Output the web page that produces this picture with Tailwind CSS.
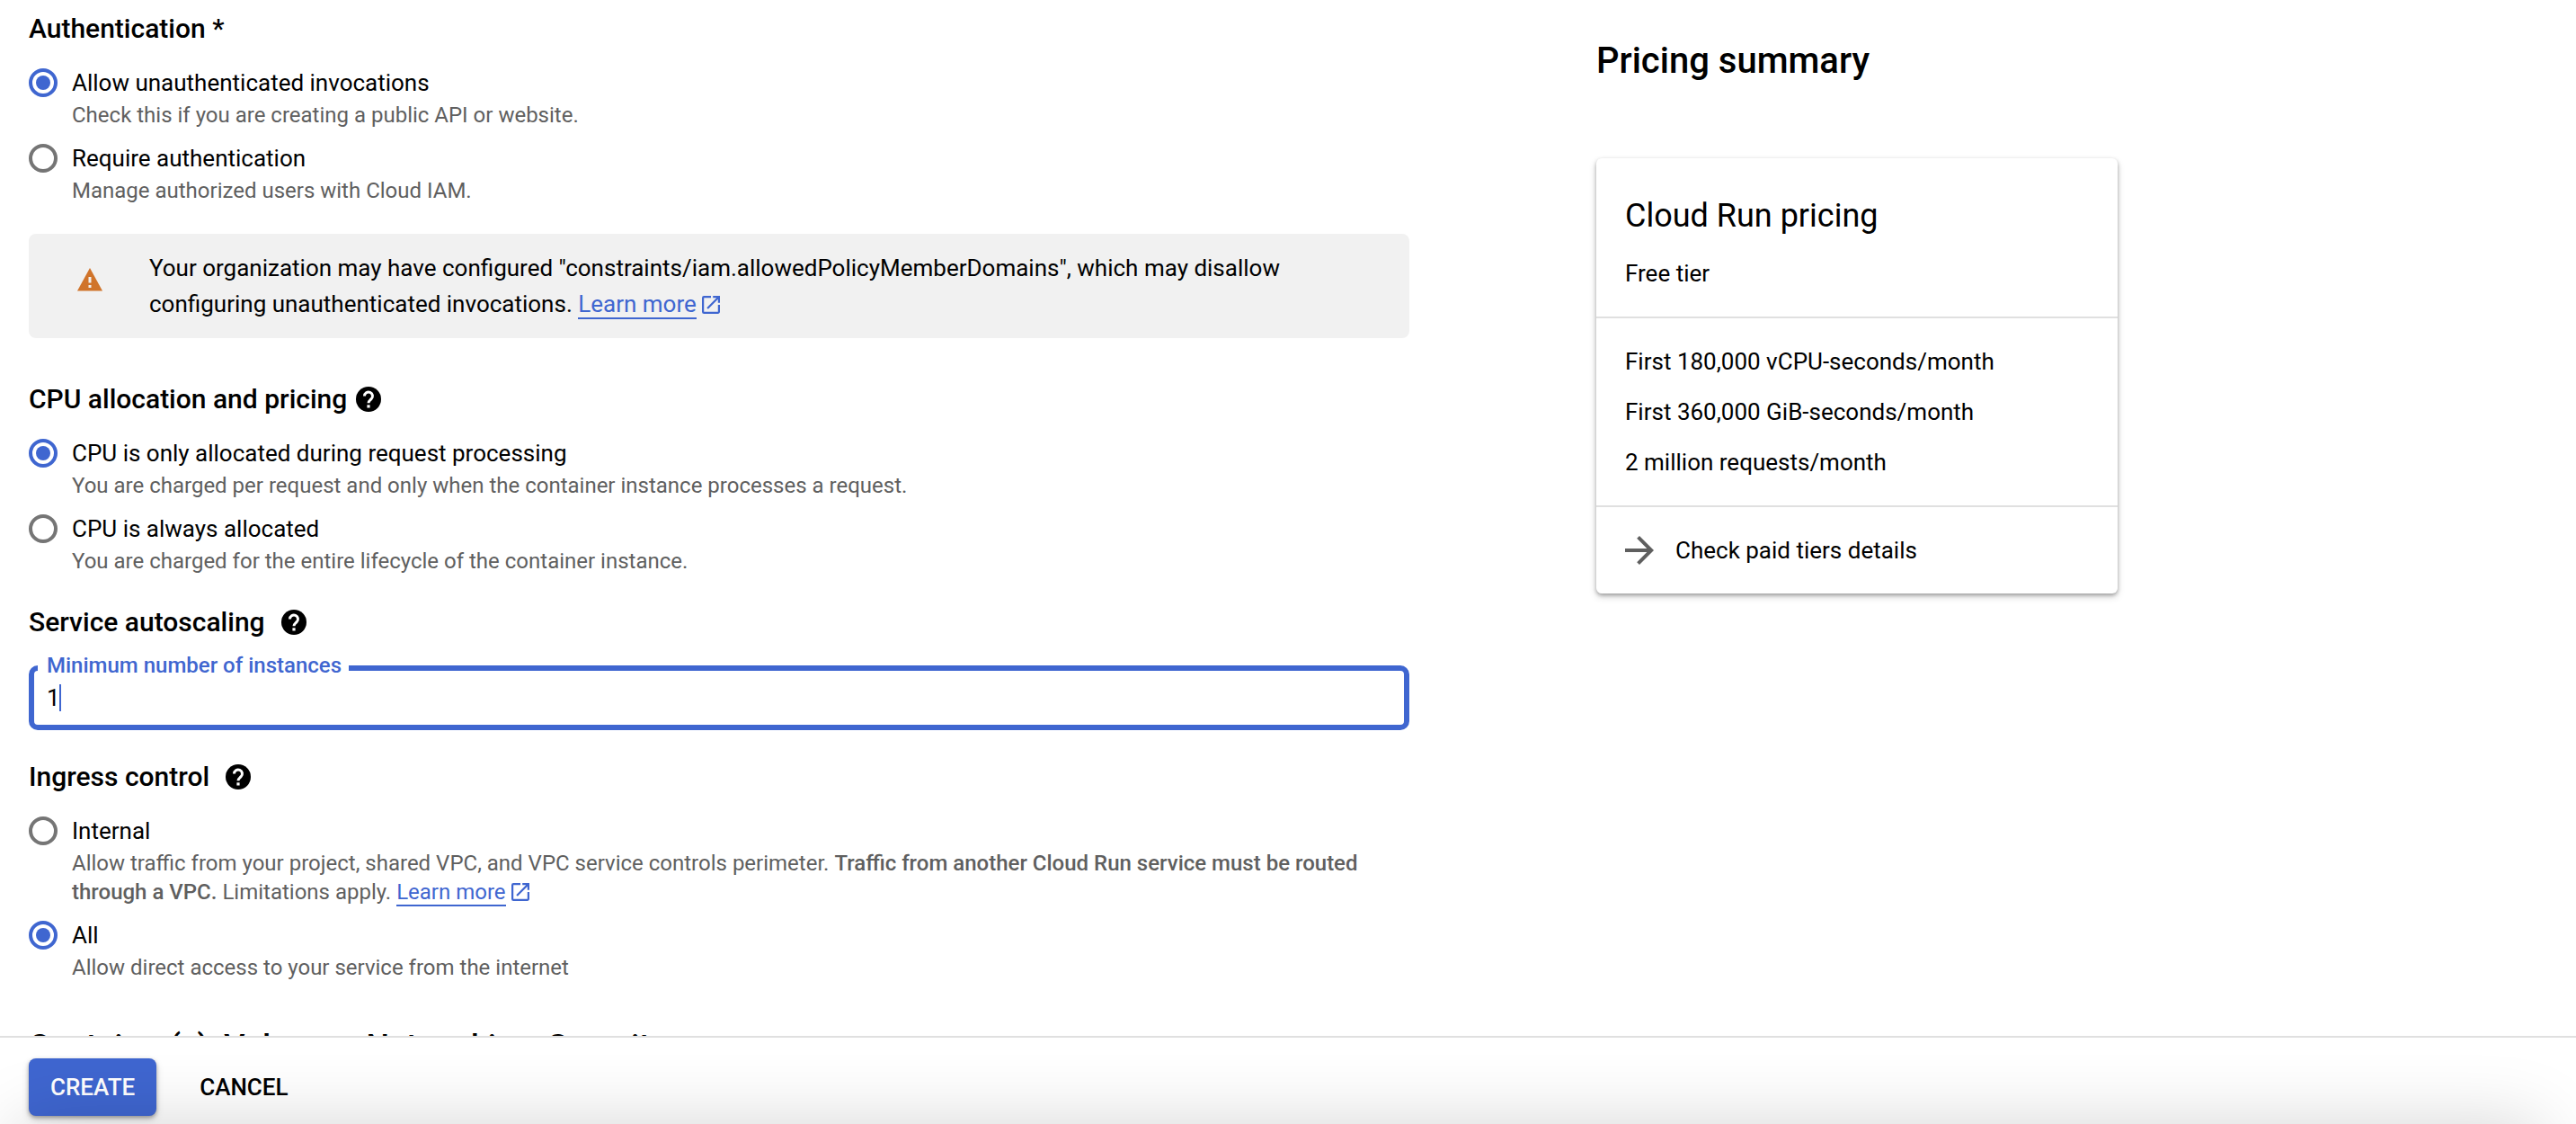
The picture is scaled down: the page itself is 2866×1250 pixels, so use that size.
<!DOCTYPE html>
<html lang="en">
<head>
<meta charset="utf-8">
<meta name="viewport" content="width=device-width, initial-scale=1">
<title>Create service</title>
<script src="https://cdn.jsdelivr.net/npm/@tailwindcss/browser@4"></script>
</head>
<body class="flex h-screen flex-col overflow-hidden bg-white font-[Roboto,sans-serif] text-[26px] leading-10 text-black">
<svg class="hidden" aria-hidden="true">
  <symbol id="help" viewBox="0 0 28 28"><circle cx="14" cy="14" r="14"/><path d="M9.500 10.500a4.500 4.500 0 1 1 7.600 3.200c-1.800 1.700-3.100 2.300-3.100 4.600" fill="none" stroke="#fff" stroke-width="3"/><path fill="#fff" d="M12.400 20.300h3.200v3.200h-3.200z"/></symbol>
  <symbol id="open" viewBox="3 3 18 18"><path d="M19 19H5V5h7V3H5a2 2 0 0 0-2 2v14a2 2 0 0 0 2 2h14c1.100 0 2-.9 2-2v-7h-2v7zM14 3v2h3.590l-9.830 9.830 1.410 1.410L19 6.410V10h2V3h-7z"/></symbol>
</svg>
<main class="flex min-h-0 flex-1 gap-52 overflow-y-auto px-8 pt-3 [scrollbar-width:none]">
  <form id="service" class="min-w-0 max-w-[1536px] flex-1">
    <section>
      <h2 class="text-3xl leading-10 font-medium">Authentication *</h2>
      <div class="mt-5 grid gap-3">
        <div class="flex gap-4">
          <input type="radio" name="auth" id="auth-open" checked class="mt-1 size-8 shrink-0 appearance-none rounded-full border-4 border-[#757575] p-1 checked:border-[#3f66d0] checked:bg-[#3f66d0] bg-clip-content">
          <div><label for="auth-open" class="block">Allow unauthenticated invocations</label><p class="text-2xl leading-8 text-[#5f5f5f]">Check this if you are creating a public API or website.</p></div>
        </div>
        <div class="flex gap-4">
          <input type="radio" name="auth" id="auth-iam" class="mt-1 size-8 shrink-0 appearance-none rounded-full border-4 border-[#757575] p-1 checked:border-[#3f66d0] checked:bg-[#3f66d0] bg-clip-content">
          <div><label for="auth-iam" class="block">Require authentication</label><p class="text-2xl leading-8 text-[#5f5f5f]">Manage authorized users with Cloud IAM.</p></div>
        </div>
      </div>
      <div class="mt-8 flex items-start gap-[52px] rounded-lg bg-[#f1f1f1] py-[18px] pr-32 pl-[54px]">
        <svg class="mt-5 h-[26px] w-7 shrink-0" viewBox="0 0 28 26" aria-hidden="true"><path fill="#d0742b" d="M14 0 28 25.500H0z"/><path fill="#f1f1f1" d="M12.500 10h3v6.500h-3zM12.500 19h3v3h-3z"/></svg>
        <p>Your organization may have configured "constraints/iam.allowedPolicyMemberDomains", which may disallow configuring unauthenticated invocations. <a href="#" class="text-[#3f66d0]"><span class="border-b-2 border-[#3f66d0]">Learn more</span><svg class="ml-1.5 inline size-5 fill-current align-[-2px]" aria-hidden="true"><use href="#open"/></svg></a></p>
      </div>
    </section>

    <section class="mt-12">
      <h2 class="flex items-center gap-[10px] text-3xl leading-10 font-medium">CPU allocation and pricing <svg class="size-7" aria-hidden="true"><use href="#help"/></svg></h2>
      <div class="mt-5 grid gap-3">
        <div class="flex gap-4">
          <input type="radio" name="cpu" id="cpu-request" checked class="mt-1 size-8 shrink-0 appearance-none rounded-full border-4 border-[#757575] p-1 checked:border-[#3f66d0] checked:bg-[#3f66d0] bg-clip-content">
          <div><label for="cpu-request" class="block">CPU is only allocated during request processing</label><p class="text-2xl leading-8 text-[#5f5f5f]">You are charged per request and only when the container instance processes a request.</p></div>
        </div>
        <div class="flex gap-4">
          <input type="radio" name="cpu" id="cpu-always" class="mt-1 size-8 shrink-0 appearance-none rounded-full border-4 border-[#757575] p-1 checked:border-[#3f66d0] checked:bg-[#3f66d0] bg-clip-content">
          <div><label for="cpu-always" class="block">CPU is always allocated</label><p class="text-2xl leading-8 text-[#5f5f5f]">You are charged for the entire lifecycle of the container instance.</p></div>
        </div>
      </div>
    </section>

    <section class="mt-8">
      <h2 class="flex items-center gap-[18px] text-3xl leading-10 font-medium">Service autoscaling <svg class="size-7" aria-hidden="true"><use href="#help"/></svg></h2>
      <div class="relative mt-7">
        <input id="min-instances" type="text" value="1" class="block h-[72px] w-full rounded-[10px] border-6 border-[#3f66d0] px-[14px] caret-transparent outline-none">
        <label for="min-instances" class="absolute -top-4 left-[10px] bg-white pr-2 pl-[10px] text-2xl leading-8 font-medium text-[#3f66d0]">Minimum number of instances</label>
        <span class="absolute top-[21px] left-[34px] h-[30px] w-0.5 bg-[#3f66d0]"></span>
      </div>
    </section>

    <section class="mt-8">
      <h2 class="flex items-center gap-[18px] text-3xl leading-10 font-medium">Ingress control <svg class="size-7" aria-hidden="true"><use href="#help"/></svg></h2>
      <div class="mt-5 grid gap-3">
        <div class="flex gap-4">
          <input type="radio" name="ingress" id="ingress-internal" class="mt-1 size-8 shrink-0 appearance-none rounded-full border-4 border-[#757575] p-1 checked:border-[#3f66d0] checked:bg-[#3f66d0] bg-clip-content">
          <div><label for="ingress-internal" class="block">Internal</label><p class="text-2xl leading-8 text-[#5f5f5f]">Allow traffic from your project, shared VPC, and VPC service controls perimeter. <b class="font-medium">Traffic from another Cloud Run service must be routed through a VPC.</b> Limitations apply. <a href="#" class="text-[#3f66d0]"><span class="border-b-2 border-[#3f66d0]">Learn more</span><svg class="ml-1.5 inline size-5 fill-current align-[-2px]" aria-hidden="true"><use href="#open"/></svg></a></p></div>
        </div>
        <div class="flex gap-4">
          <input type="radio" name="ingress" id="ingress-all" checked class="mt-1 size-8 shrink-0 appearance-none rounded-full border-4 border-[#757575] p-1 checked:border-[#3f66d0] checked:bg-[#3f66d0] bg-clip-content">
          <div><label for="ingress-all" class="block">All</label><p class="text-2xl leading-8 text-[#5f5f5f]">Allow direct access to your service from the internet</p></div>
        </div>
      </div>
    </section>

    <h2 class="mt-12 text-4xl leading-12 font-medium">Container(s), Volumes, Networking, Security</h2>
  </form>

  <aside class="w-[580px] shrink-0 pt-8">
    <h2 class="text-[40px] leading-12 font-medium">Pricing summary</h2>
    <div class="mt-21 rounded-md bg-white shadow-[0_2px_4px_rgba(0,0,0,0.3),0_4px_8px_rgba(0,0,0,0.15)]">
      <div class="px-8 pt-10 pb-7">
        <h3 class="text-4xl leading-12">Cloud Run pricing</h3>
        <p class="mt-5">Free tier</p>
      </div>
      <ul class="grid gap-4 border-y-2 border-[#e0e0e0] px-8 py-7">
        <li>First 180,000 vCPU-seconds/month</li>
        <li>First 360,000 GiB-seconds/month</li>
        <li>2 million requests/month</li>
      </ul>
      <a href="#" class="flex items-center gap-6 px-8 py-7"><svg class="size-8" viewBox="4 4 16 16" fill="#5f5f5f" aria-hidden="true"><path d="m12 4-1.410 1.410L16.170 11H4v2h12.170l-5.580 5.590L12 20l8-8z"/></svg>Check paid tiers details</a>
    </div>
  </aside>
</main>
<footer class="relative flex shrink-0 gap-6 overflow-hidden border-t-2 border-[#e0e0e0] bg-white px-8 pt-[23px] pb-[9px]">
  <button type="submit" form="service" class="h-16 rounded-lg bg-[#3f66d0] px-6 font-medium text-white shadow-[0_2px_4px_rgba(0,0,0,0.3),0_4px_8px_rgba(0,0,0,0.15)]">CREATE</button>
  <button type="button" class="h-16 rounded-lg px-6 font-medium">CANCEL</button>
  <div class="pointer-events-none absolute top-full right-10 left-5 h-40 shadow-[0_0_80px_rgba(0,0,0,0.17)]"></div>
</footer>
</body>
</html>
